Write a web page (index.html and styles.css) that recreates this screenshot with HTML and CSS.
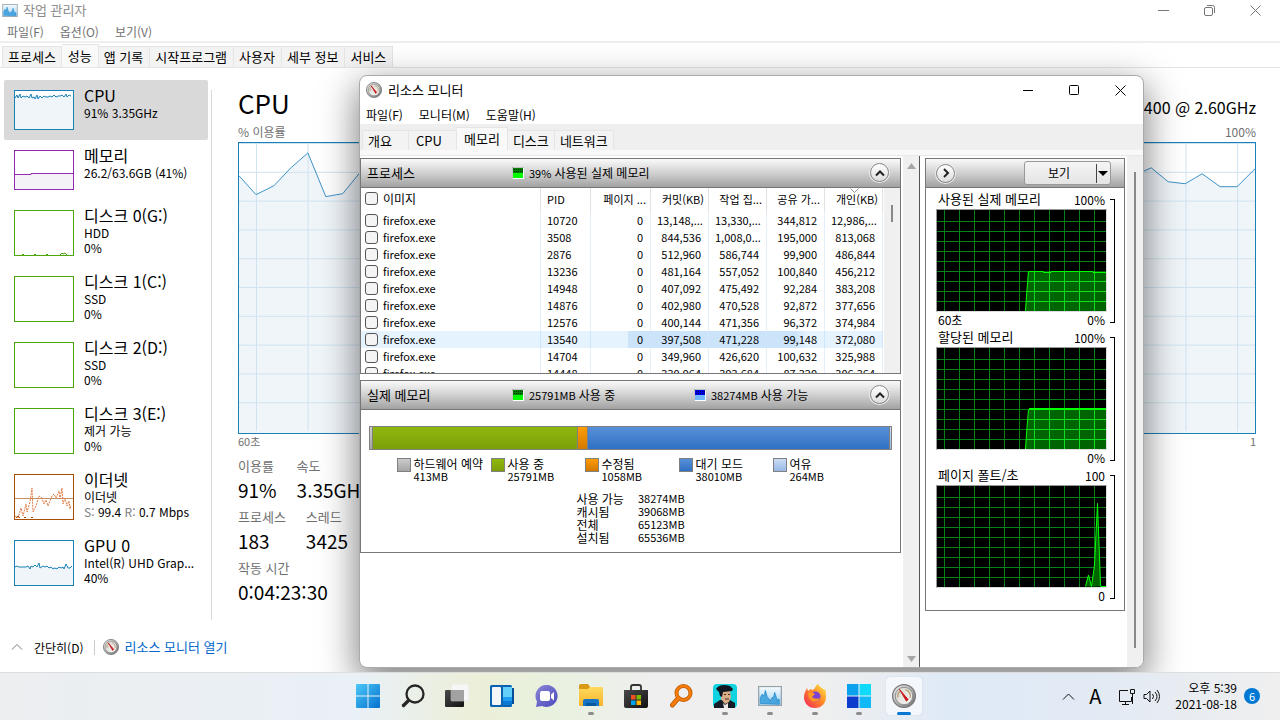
FILE: index.html
```html
<!DOCTYPE html>
<html lang="ko">
<head>
<meta charset="utf-8">
<title>작업 관리자</title>
<link rel="stylesheet" href="styles.css">
</head>
<body>
<svg class="defs" aria-hidden="true">
  <defs>
    <linearGradient id="rim" x1="0" y1="0" x2="1" y2="1"><stop offset="0" stop-color="#f4f4f4"/><stop offset="1" stop-color="#6a6a6a"/></linearGradient>
    <linearGradient id="face" x1="0" y1="0" x2="1" y2="1"><stop offset="0" stop-color="#d2d2cd"/><stop offset="1" stop-color="#fafaf7"/></linearGradient>
    <linearGradient id="win" x1="0" y1="0" x2="1" y2="1"><stop offset="0" stop-color="#4bc8f8"/><stop offset="1" stop-color="#0571cf"/></linearGradient>
    <linearGradient id="dark" x1="0" y1="0" x2="1" y2="1"><stop offset="0" stop-color="#4a4a4a"/><stop offset="1" stop-color="#111"/></linearGradient>
    <linearGradient id="chat" x1="0" y1="0" x2="1" y2="1"><stop offset="0" stop-color="#8a87d6"/><stop offset="1" stop-color="#4c48bd"/></linearGradient>
    <linearGradient id="fold" x1="0" y1="0" x2="0" y2="1"><stop offset="0" stop-color="#ffd95f"/><stop offset="1" stop-color="#f7b42a"/></linearGradient>
    <linearGradient id="fox" x1="1" y1="0" x2="0" y2="1"><stop offset="0" stop-color="#fff04a"/><stop offset=".45" stop-color="#ff8a26"/><stop offset="1" stop-color="#f0205c"/></linearGradient>
    <linearGradient id="monitor" x1="0" y1="0" x2="0" y2="1"><stop offset="0" stop-color="#f7fbfe"/><stop offset="1" stop-color="#9bd0f2"/></linearGradient>
    <pattern id="dots" width="2" height="2" patternUnits="userSpaceOnUse"><rect width="1" height="1" fill="#000" opacity=".6"/></pattern>
    <symbol id="gauge" viewBox="0 0 16 16">
      <circle cx="8" cy="8" r="7.6" fill="url(#rim)" stroke="#777" stroke-width=".8"/>
      <circle cx="8" cy="8" r="5.8" fill="url(#face)" stroke="#888" stroke-width=".6"/>
      <path d="M4 9a4.2 4.2 0 0 1 2-4.6M9 3.8a4.2 4.2 0 0 1 3 5.6" fill="none" stroke="#b9a27c" stroke-width="1"/>
      <path d="M5 3.6 10.8 10.4 9.6 11.4z" fill="#c9151b" stroke="#c9151b" stroke-width=".6"/>
    </symbol>
    <symbol id="taskmon" viewBox="0 0 26 22">
      <rect x=".7" y=".7" width="24.6" height="20.6" fill="url(#monitor)" stroke="#98a4ac" stroke-width="1.4"/>
      <path d="M2.5 19V13l2-4 2 2 1.5-6L10 12l2 2 1 3 2-4 2-1 1-5 2 6 1 4 1-3 1 1v5z" fill="#4aa7e0" stroke="#2588ca" stroke-width=".8"/>
    </symbol>
    <symbol id="grid" viewBox="0 0 171 103">
      <rect width="171" height="103" fill="#000"/>
      <path d="M8.500 1V102M23.500 1V102M38.500 1V102M53.500 1V102M68.500 1V102M83.500 1V102M98.500 1V102M113.500 1V102M128.500 1V102M143.500 1V102M158.500 1V102M1 12.500H170M1 22.500H170M1 32.500H170M1 42.500H170M1 52.500H170M1 62.500H170M1 72.500H170M1 82.500H170M1 92.500H170" stroke="#087f17" fill="none"/>
    </symbol>
    <symbol id="used" viewBox="0 0 12 12"><rect width="12" height="12" fill="#fff"/><path d="M0 12V0h12" fill="none" stroke="#888"/><rect x="1" y="1" width="10" height="5" fill="#008000"/><rect x="1" y="1" width="10" height="5" fill="url(#dots)"/><rect x="1" y="6" width="10" height="5" fill="#00fb00"/></symbol>
    <symbol id="free" viewBox="0 0 12 12"><rect width="12" height="12" fill="#fff"/><path d="M0 12V0h12" fill="none" stroke="#888"/><rect x="1" y="1" width="10" height="5" fill="#0000e8"/><rect x="1" y="1" width="10" height="5" fill="url(#dots)"/><rect x="1" y="6" width="10" height="5" fill="#74b8ff"/></symbol>
  </defs>
</svg>

<main class="desktop">
  <section class="taskmgr">
    <header class="tm-title">
      <svg class="tm-icon"><use href="#taskmon"/></svg>
      <span>작업 관리자</span>
      <div class="tm-controls">
        <button aria-label="최소화"><svg width="11" height="11"><path d="M0 5.500H11"/></svg></button>
        <button aria-label="이전 크기로"><svg width="11" height="11"><rect x=".5" y="2.500" width="8" height="8" rx="1.500"/><path d="M3 .5H8.500Q10.500 .5 10.500 2.500V8"/></svg></button>
        <button aria-label="닫기"><svg width="11" height="11"><path d="M.5 .5l10 10M10.500 .5l-10 10"/></svg></button>
      </div>
    </header>
    <nav class="menu tm-menu"><button>파일(F)</button><button>옵션(O)</button><button>보기(V)</button></nav>
    <nav class="tabs tm-tabs">
      <button>프로세스</button><button class="active">성능</button><button>앱 기록</button><button>시작프로그램</button><button>사용자</button><button>세부 정보</button><button>서비스</button>
    </nav>
    <div class="tm-body">
      <aside class="side">
        <button class="item selected"><svg class="thumb short blue" viewBox="1 1 58 38"><path class="fill" d="M1 6H59V39H1z"/><path d="M1 8l2-3 1 3 2-4 1 4 2-2 2 1 2-1 2 2 2-4 1 4 2-1 1 2 2-4 1 4 2-3 2 2 2-2 2 1 2 0 2-1 2 1 2-2 2 2 2-1 2 0 2-1 2 2 2-3 1 3 2-2 2 1"/></svg><span class="txt"><strong>CPU</strong><span>91% 3.35GHz</span></span></button>
        <button class="item"><svg class="thumb short purple" viewBox="1 1 58 38"><path class="fill" d="M1 24H17V23H59V39H1z"/><path d="M1 24.500H17V23.500H59"/></svg><span class="txt"><strong>메모리</strong><span>26.2/63.6GB (41%)</span></span></button>
        <button class="item"><svg class="thumb green" viewBox="1 1 58 44"><path d="M8 45l1-1 1 1M20 45l1-1 1 1M32 45l1-1 1 1M46 45l2-2 1 1 2-1 2 2"/></svg><span class="txt"><strong>디스크 0(G:)</strong><span>HDD</span><span>0%</span></span></button>
        <button class="item"><svg class="thumb green"></svg><span class="txt"><strong>디스크 1(C:)</strong><span>SSD</span><span>0%</span></span></button>
        <button class="item"><svg class="thumb green"></svg><span class="txt"><strong>디스크 2(D:)</strong><span>SSD</span><span>0%</span></span></button>
        <button class="item"><svg class="thumb green"></svg><span class="txt"><strong>디스크 3(E:)</strong><span>제거 가능</span><span>0%</span></span></button>
        <button class="item"><svg class="thumb brown" viewBox="1 1 58 44"><path class="level" d="M1 24.500H59"/><path class="dotted" d="M1 42l3 2 3-10 2 8 3-12 1 8 3-10 2-14 1 24 3-6 3-10 3 2 2 6 2-4 2 6 4-10 2-2 2 4 3-7 1 8 2-11 1 16 2-6 2 8 2-5 1 8 1-4"/><path d="M2 44l2-2 2 2M10 44l1-1 1 1M17 44l1-1 1 1"/></svg><span class="txt"><strong>이더넷</strong><span>이더넷</span><span><i>S:</i> 99.4 <i>R:</i> 0.7 Mbps</span></span></button>
        <button class="item"><svg class="thumb blue" viewBox="1 1 58 44"><path class="fill" d="M1 27H59V45H1z"/><path d="M1 27l2-1 2 1h7l2-1 2 3 1-3 2 1 2-2 2 2 2-4 1 5 3-2 2 1 2-1 2 2 2-1 2 2 2-1 2 1 2-2 2 1 2-1 1 2 2-5 2 4 2 0 2-2"/></svg><span class="txt"><strong>GPU 0</strong><span>Intel(R) UHD Grap...</span><span>40%</span></span></button>
      </aside>
      <section class="perf">
        <div class="perf-head"><h1>CPU</h1><span>i5-11400 @ 2.60GHz</span></div>
        <div class="caption"><span>% 이용률</span><span>100%</span></div>
        <svg class="cpu-chart" viewBox="0 0 1018 292" preserveAspectRatio="none">
          <defs><pattern id="cells" x="17" y="29" width="51.740" height="29" patternUnits="userSpaceOnUse"><path d="M.5 0V29M0 .5H52" stroke="#cfe3f0" fill="none"/></pattern></defs>
          <path fill="#f0f5fa" d="M0 33 17 52 35 43 52 25 69 10 87 54 104 51 121 30 400 40 905 29 914 25 931 39 948 41 965 31 983 44 1000 44 1018 26V292H0z"/>
          <rect width="1018" height="290" fill="url(#cells)"/>
          <path fill="none" stroke="#3b92c8" d="M0 33 17 52 35 43 52 25 69 10 87 54 104 51 121 30 400 40 905 29 914 25 931 39 948 41 965 31 983 44 1000 44 1018 26"/>
        </svg>
        <div class="caption below"><span>60초</span><span>1</span></div>
        <dl class="stats"><div><dt>이용률</dt><dd>91%</dd></div><div><dt>속도</dt><dd>3.35GHz</dd></div></dl>
        <dl class="stats"><div><dt>프로세스</dt><dd>183</dd></div><div><dt>스레드</dt><dd>3425</dd></div></dl>
        <dl class="stats"><div><dt>작동 시간</dt><dd>0:04:23:30</dd></div></dl>
      </section>
    </div>
    <footer class="tm-foot">
      <button><svg width="12" height="8"><path d="M1 6.500 6 1.500 11 6.500"/></svg>간단히(D)</button>
      <a href="#monitor-window"><svg class="g16"><use href="#gauge"/></svg>리소스 모니터 열기</a>
    </footer>
  </section>

  <section class="resmon" id="monitor-window">
    <header class="rm-title">
      <svg class="g16"><use href="#gauge"/></svg><span>리소스 모니터</span>
      <div class="rm-controls">
        <button aria-label="최소화"><svg width="11" height="11"><path d="M0 5.500H10"/></svg></button>
        <button aria-label="최대화"><svg width="11" height="11"><rect x=".5" y=".5" width="9" height="9" rx="1"/></svg></button>
        <button aria-label="닫기"><svg width="11" height="11"><path d="M.5 .5l10 10M10.500 .5l-10 10"/></svg></button>
      </div>
    </header>
    <nav class="menu rm-menu"><button>파일(F)</button><button>모니터(M)</button><button>도움말(H)</button></nav>
    <div class="rm-strip">
      <nav class="tabs rm-tabs"><button>개요</button><button>CPU</button><button class="active">메모리</button><button>디스크</button><button>네트워크</button></nav>
    </div>
    <div class="rm-body">
      <div class="left">
        <section class="panel">
          <header><h2>프로세스</h2><span class="note first"><svg><use href="#used"/></svg><span>39% <span class="ko">사용된 실제 메모리</span></span></span><button class="round" aria-label="접기"><svg width="12" height="8"><path d="M2 6.500 6 2.500 10 6.500"/></svg></button></header>
          <div class="list">
            <table>
              <colgroup><col class="c-img"><col class="c-pid"><col class="c-page"><col><col><col><col></colgroup>
              <thead><tr><th><label><input type="checkbox"><span class="ko">이미지</span></label></th><th>PID</th><th class="n">페이지 ...</th><th class="n">커밋(KB)</th><th class="n">작업 집...</th><th class="n">공유 가...</th><th class="n"><svg class="sort" width="9" height="5"><path d="M.5 .5l4 4 4-4"/></svg>개인(KB)</th></tr></thead>
              <tbody>
                <tr><td><label><input type="checkbox">firefox.exe</label></td><td>10720</td><td>0</td><td>13,148,...</td><td>13,330,...</td><td>344,812</td><td>12,986,...</td></tr>
                <tr><td><label><input type="checkbox">firefox.exe</label></td><td>3508</td><td>0</td><td>844,536</td><td>1,008,0...</td><td>195,000</td><td>813,068</td></tr>
                <tr><td><label><input type="checkbox">firefox.exe</label></td><td>2876</td><td>0</td><td>512,960</td><td>586,744</td><td>99,900</td><td>486,844</td></tr>
                <tr><td><label><input type="checkbox">firefox.exe</label></td><td>13236</td><td>0</td><td>481,164</td><td>557,052</td><td>100,840</td><td>456,212</td></tr>
                <tr><td><label><input type="checkbox">firefox.exe</label></td><td>14948</td><td>0</td><td>407,092</td><td>475,492</td><td>92,284</td><td>383,208</td></tr>
                <tr><td><label><input type="checkbox">firefox.exe</label></td><td>14876</td><td>0</td><td>402,980</td><td>470,528</td><td>92,872</td><td>377,656</td></tr>
                <tr><td><label><input type="checkbox">firefox.exe</label></td><td>12576</td><td>0</td><td>400,144</td><td>471,356</td><td>96,372</td><td>374,984</td></tr>
                <tr class="hover"><td><label><input type="checkbox">firefox.exe</label></td><td>13540</td><td>0</td><td>397,508</td><td>471,228</td><td>99,148</td><td>372,080</td></tr>
                <tr><td><label><input type="checkbox">firefox.exe</label></td><td>14704</td><td>0</td><td>349,960</td><td>426,620</td><td>100,632</td><td>325,988</td></tr>
                <tr><td><label><input type="checkbox">firefox.exe</label></td><td>14448</td><td>0</td><td>330,964</td><td>393,684</td><td>87,320</td><td>306,364</td></tr>
              </tbody>
            </table>
            <div class="list-scroll"><span></span></div>
          </div>
        </section>
        <section class="panel">
          <header><h2>실제 메모리</h2><span class="note first"><svg><use href="#used"/></svg><span>25791MB <span class="ko">사용 중</span></span></span><span class="note"><svg><use href="#free"/></svg><span>38274MB <span class="ko">사용 가능</span></span></span><button class="round" aria-label="접기"><svg width="12" height="8"><path d="M2 6.500 6 2.500 10 6.500"/></svg></button></header>
          <div class="mem">
            <div class="bar"><span class="gray"></span><span class="lime"></span><span class="amber"></span><span class="royal"></span><span class="pale"></span></div>
            <ul class="legend">
              <li><b class="gray"></b><div><div class="ko">하드웨어 예약</div>413MB</div></li>
              <li><b class="lime"></b><div><div class="ko">사용 중</div>25791MB</div></li>
              <li><b class="amber"></b><div><div class="ko">수정됨</div>1058MB</div></li>
              <li><b class="royal"></b><div><div class="ko">대기 모드</div>38010MB</div></li>
              <li><b class="pale"></b><div><div class="ko">여유</div>264MB</div></li>
            </ul>
            <dl class="totals"><dt>사용 가능</dt><dd>38274MB</dd><dt>캐시됨</dt><dd>39068MB</dd><dt>전체</dt><dd>65123MB</dd><dt>설치됨</dt><dd>65536MB</dd></dl>
          </div>
        </section>
      </div>
      <div class="left-scroll"><svg width="9" height="6"><path d="M4.500 0 9 6H0z"/></svg><svg width="9" height="6"><path d="M0 0H9L4.500 6z"/></svg></div>
      <div class="right">
        <section class="panel">
          <header><button class="round" aria-label="숨기기"><svg width="8" height="12"><path d="M2 2 6 6 2 10"/></svg></button><button class="view"><span>보기</span><svg width="15" height="19"><path class="sep" d="M1.500 0V19"/><path d="M3 7H13L8 12z"/></svg></button></header>
          <div class="graphs">
            <div class="graph">
              <div class="g-main"><div class="g-row"><span class="g-name">사용된 실제 메모리</span><span>100%</span></div>
              <svg class="plot" viewBox="1 1 169 101"><use href="#grid" width="171" height="103"/><path fill="#006400" d="M89 102 91 84 92 62H170V102z"/><path d="M98.500 62V102M113.500 62V102M128.500 62V102M143.500 62V102M158.500 62V102M92 72.500H170M91 82.500H170M90 92.500H170" stroke="#10dc20"/><path fill="none" stroke="#0f0" d="M89.500 102 91 80 92.500 62.500H107.500V63.500H115V62.500H157V63.500H170"/></svg>
              <div class="g-row"><span>60초</span><span>0%</span></div></div><i class="bracket"></i>
            </div>
            <div class="graph">
              <div class="g-main"><div class="g-row"><span class="g-name">할당된 메모리</span><span>100%</span></div>
              <svg class="plot" viewBox="1 1 169 101"><use href="#grid" width="171" height="103"/><path fill="#006400" d="M89 102 91 84 93 61H170V102z"/><path d="M98.500 62V102M113.500 62V102M128.500 62V102M143.500 62V102M158.500 62V102M92 72.500H170M91 82.500H170M90 92.500H170" stroke="#10dc20"/><path fill="none" stroke="#0f0" d="M89.500 102 91 80 92.500 63"/><path stroke="#0f0" stroke-width="2" d="M93 62H170"/></svg>
              <div class="g-row"><span></span><span>0%</span></div></div><i class="bracket"></i>
            </div>
            <div class="graph">
              <div class="g-main"><div class="g-row"><span class="g-name">페이지 폴트/초</span><span>100</span></div>
              <svg class="plot" viewBox="1 1 169 101"><use href="#grid" width="171" height="103"/><path fill="#006400" stroke="#0f0" d="M149.500 101.500 152.500 90 155.500 101.500 158.500 80 161.500 18.500 164.500 100 165 101.500H170"/></svg>
              <div class="g-row"><span></span><span>0</span></div></div><i class="bracket"></i>
            </div>
          </div>
        </section>
      </div>
      <div class="right-scroll"><span></span></div>
    </div>
  </section>
</main>

<footer class="taskbar">
  <nav class="apps">
    <button aria-label="시작"><svg viewBox="0 0 24 24"><path fill="url(#win)" d="M0 1Q0 0 1 0H11.500V11.500H0zM12.500 0H23q1 0 1 1V11.500H12.500zM0 12.500H11.500V24H1q-1 0-1-1zM12.500 12.500H24V23q0 1-1 1H12.500z"/></svg></button>
    <button aria-label="검색"><svg viewBox="0 0 24 24" fill="none" stroke="#262626" stroke-width="2.300" stroke-linecap="round"><circle cx="14" cy="10" r="8.500"/><path stroke-width="3.400" d="M7.500 16.500 2.500 21.500"/></svg></button>
    <button aria-label="작업 보기"><svg viewBox="0 0 24 24"><rect y="6" width="19" height="17" rx="1" fill="url(#dark)"/><rect x="6" width="18" height="17" rx="1" fill="#f6f6f6" stroke="#ddd" stroke-width=".5"/><path fill="#a2a2a2" d="M6 6H19V17H6z"/></svg></button>
    <button aria-label="위젯"><svg viewBox="0 0 24 24"><rect y="1" width="22" height="22" rx="1.500" fill="#0b62b0"/><path d="M20 4h4v16h-4z" fill="#064f96"/><rect x="2" y="3" width="9" height="18" rx="1" fill="#f4f5f7"/><path fill="#64cff8" d="M13 3h9v10h-9z"/><path fill="#1f9cf1" d="M13 13h9v4h-9z"/><path fill="#0b78d4" d="M13 17h9v4h-9z"/></svg></button>
    <button aria-label="채팅"><svg viewBox="0 0 24 24"><path fill="url(#chat)" d="M12 1a11 11 0 1 1-5 21L1 23l1-5.500A11 11 0 0 1 12 1z"/><rect x="5" y="7" width="10" height="10" rx="2" fill="#fff"/><path fill="#fff" d="M16 10.500 19 8v8.500l-3-2.500z"/></svg></button>
    <button aria-label="파일 탐색기" class="open"><svg viewBox="0 0 24 24"><path fill="#d99a12" d="M0 2q0-2 2-2h7l2 3v4H0z"/><path fill="url(#fold)" d="M0 5h9l2-2h12q1 0 1 1v18H1q-1 0-1-1z"/><path fill="#1674c5" d="M4 22v-5q0-2 2-2h12q2 0 2 2v5z"/><path fill="#0a579d" d="M7 19h10v3H7z"/></svg></button>
    <button aria-label="스토어"><svg viewBox="0 0 24 24"><path d="M7 7V3q0-2 2-2h6q2 0 2 2v4" fill="none" stroke="#333" stroke-width="1.800"/><path fill="url(#dark)" d="M0 6h24v16q0 2-2 2H2q-2 0-2-2z"/><path fill="#f25022" d="M7 11h4.500v4.500H7z"/><path fill="#7fba00" d="M12.500 11H17v4.500h-4.500z"/><path fill="#00a4ef" d="M7 16.500h4.500V21H7z"/><path fill="#ffb900" d="M12.500 16.500H17V21h-4.500z"/></svg></button>
    <button aria-label="찾기"><svg viewBox="0 0 24 24" fill="none" stroke="#b85800" stroke-linecap="round"><circle cx="14.500" cy="9" r="7" stroke-width="4"/><path stroke-width="5" d="M9 14.500 3.500 21"/><g stroke="#f57c0c"><circle cx="14.500" cy="9" r="7" stroke-width="2.600"/><path stroke-width="3.400" d="M9 14.500 3.500 21"/></g></svg></button>
    <button aria-label="프로필" class="open"><svg viewBox="0 0 24 24"><rect width="24" height="24" rx="4" fill="#11d3e0"/><path fill="#151c28" d="M1 24V20l6-4h10l5 3v5z"/><path fill="#d9ac88" d="M8 7h9l1 6-2 5-4 2-4-5z"/><path fill="#111722" d="M3 5q4-6 14-3l3 3-1 2-9 1-1 5-2-1-1-4z"/><path d="M11 10.500h2M15 10.500h2M12 15h4" stroke="#4a2c22"/><path fill="#e9e4de" d="m10 19 2 2 3-2v5h-4z"/></svg></button>
    <button aria-label="작업 관리자" class="open"><svg viewBox="0 0 26 22"><use href="#taskmon" width="26" height="22"/></svg></button>
    <button aria-label="Firefox" class="open"><svg viewBox="0 0 24 24"><path fill="url(#fox)" d="M12 24C5 24 1 19 1 13 1 9 3 6 4 4l1 3 3-2 1 1c3 0 3-4 6-6 1 3 5 4 6 6l1-1c1 3 1 5 1 8 0 6-4 11-11 11z"/><circle cx="12.500" cy="12.500" r="5" fill="#7b42d6"/><path fill="#ff9626" d="M5 9q4-2 7 1l-3 3q3 3 8 1-3 5-8 3-4-2-4-8z"/></svg></button>
    <button aria-label="Windows 앱" class="open"><svg viewBox="0 0 24 24"><path fill="#0aa1ee" d="M0 0h11.500v11.500H0z"/><path fill="#10dafa" d="M12.500 0H24v11.500H12.500z"/><path fill="#0d3bcb" d="M0 12.500h11.500V24H0z"/><path fill="#12b9f7" d="M12.500 12.500H24V24H12.500z"/></svg></button>
    <button aria-label="리소스 모니터" class="open current"><svg viewBox="0 0 16 16"><use href="#gauge" width="16" height="16"/></svg></button>
  </nav>
  <div class="tray">
    <button aria-label="숨겨진 아이콘 표시"><svg width="13" height="9"><path d="M1 7.500 6.500 2 12 7.500"/></svg></button>
    <span class="ime">A</span>
    <svg width="18" height="17"><path d="M10 2.500H1.500V13.500H13.500V9M7.500 13.500v3M4 16.500h7"/><path d="M12.500 1.500h4v4h-4zM14.500 5.500V16"/></svg>
    <svg width="17" height="15"><path d="M1 5.500h2.500L7 2v11L3.500 9.500H1zM9.500 5q2 2.500 0 5M12 3q4 4.500 0 9M14 1q5 6.500 0 13"/></svg>
    <time datetime="2021-08-18T17:39">오후 5:39<br>2021-08-18</time>
    <span class="badge">6</span>
  </div>
</footer>
</body>
</html>
```
FILE: styles.css
```css
* { box-sizing: border-box; }
body {
  margin: 0; height: 100vh; display: flex; flex-direction: column; overflow: hidden;
  font: 12px/16px "Noto Sans CJK KR", sans-serif; color: #000; background: #fff;
}
button { font: inherit; color: inherit; background: none; border: 0; padding: 0; margin: 0; white-space: nowrap; }
h1, h2, dl, dd, dt, ul { margin: 0; padding: 0; font-weight: 400; }
.defs { position: absolute; width: 0; height: 0; }
.g16 { width: 16px; height: 16px; flex: none; }
.ko { font-size: 12px; }
.desktop { position: relative; flex: 1; min-height: 0; overflow: hidden; }

/* Task manager */
.taskmgr { height: 100%; display: flex; flex-direction: column; }
.tm-title { display: flex; align-items: center; height: 22px; padding: 0 2px 2px; gap: 5px; font-size: 13px; color: #8c8c8c; }
.tm-icon { width: 16px; height: 13px; }
.tm-controls { margin-left: auto; display: flex; }
.tm-controls button { width: 46px; display: grid; place-items: center; }
.tm-controls svg { fill: none; stroke: #777; }
.menu { display: flex; gap: 16px; padding-left: 7px; height: 20px; }
.tm-menu { height: 21px; border-bottom: 2px solid #efefef; color: #707070; }
.tabs { display: flex; align-items: flex-end; }
.tabs button { height: 21px; padding: 0 5px; border: 1px solid #e5e5e5; border-left-width: 0; border-bottom: 0; background: #f3f3f3; font-size: 13px; line-height: 18px; }
.tabs button:first-child { border-left-width: 1px; }
.tabs .active { height: 23px; background: #f9f9f9; }
.tm-tabs { height: 25px; padding-left: 2px; border-bottom: 1px solid #e5e5e5; }
.tm-tabs button:nth-child(n+3) { padding-right: 6px; }
.tm-tabs .active { padding: 0 6px; }
.tm-body { flex: 1; min-height: 0; display: flex; padding: 12px 24px 0 4px; }
.side { width: 204px; flex: none; }
.item { display: flex; width: 100%; gap: 10px; height: 66px; padding: 5px 0 0 10px; text-align: left; align-items: flex-start; }
.item:nth-child(-n+2) { height: 60px; }
.selected { background: #d9d9d9; border-radius: 2px; }
.thumb { width: 60px; height: 46px; margin-top: 5px; flex: none; border: 1px solid; background: #fff; fill: none; stroke: currentColor; }
.short { height: 40px; }
.thumb .fill { stroke: none; fill: #f0f5fa; }
.blue { color: #1a80b8; }
.purple { color: #9528b4; }
.purple .fill { fill: #f4f2f6; }
.green { color: #4da60c; }
.brown { color: #a74f01; }
.thumb .dotted { stroke: #e07840; stroke-dasharray: 2 1; }
.thumb .level { stroke: #c49068; }
.txt { display: flex; flex-direction: column; line-height: 15px; }
.txt strong { font-weight: 400; font-size: 16px; line-height: 20px; }
.txt i { font-style: normal; color: #808080; }
.perf { flex: 1; min-width: 0; margin: 10px 0 4px 3px; padding-left: 26px; border-left: 1px solid #d9d9d9; }
.perf-head { display: flex; justify-content: space-between; align-items: flex-end; height: 34px; margin-top: -4px; padding-bottom: 1px; font-size: 16px; line-height: 24px; }
.perf-head h1 { font-size: 26px; line-height: 32px; }
.caption { display: flex; justify-content: space-between; height: 22px; line-height: 23px; color: #707070; }
.cpu-chart { display: block; width: 100%; height: 292px; border: 1px solid #1a80b8; }
.caption.below { height: 23px; line-height: 15px; font-size: 11px; }
.stats { display: flex; gap: 20px; height: 51px; font-size: 13px; color: #707070; }
.stats dd { font-size: 19px; line-height: 28px; color: #000; margin-top: 1px; }
.stats dt { line-height: 18px; }
.tm-foot { height: 48px; display: flex; align-items: center; padding: 0 0 2px 11px; font-size: 13px; }
.tm-foot button { display: flex; gap: 11px; align-items: center; padding-right: 10px; border-right: 1px solid #ccc; line-height: 15px; font-size: 12px; }
.tm-foot button svg { fill: none; stroke: #777; }
.tm-foot a { display: flex; gap: 6px; margin-left: 8px; color: #0066cc; text-decoration: none; }

/* Resource monitor */
.resmon {
  position: absolute; left: 359px; top: 75px; width: 785px; height: 593px; overflow: hidden;
  display: flex; flex-direction: column; background: #fff; border: 1px solid #aaa; border-radius: 8px;
  box-shadow: 0 12px 36px 2px rgba(0,0,0,.5);
}
.rm-title { display: flex; align-items: center; gap: 6px; height: 28px; padding-left: 6px; font-size: 13px; flex: none; }
.rm-controls { margin-left: auto; display: flex; }
.rm-controls button { width: 46px; display: grid; place-items: center; }
.rm-controls svg { fill: none; stroke: #000; }
.rm-menu { padding-left: 6px; flex: none; line-height: 22px; font-size: 12px; }
.rm-strip { background: #efefef; flex: none; padding-top: 2px; border-bottom: 1px solid #e8e8e8; }
.rm-tabs { height: 29px; padding: 0 1px 0 2px; border-bottom: 5px solid #f9f9f9; }
.rm-tabs button { min-width: 47px; height: 20px; padding: 0 5px; text-align: left; }
.rm-tabs button:nth-child(2) { padding-left: 7px; min-width: 48px; }
.rm-tabs .active { height: 23px; padding: 0 7px; }
.rm-body { flex: 1; min-height: 0; display: flex; }
.left { flex: 1; min-width: 0; display: flex; flex-direction: column; gap: 6px; padding: 2px 2px 0 0; }
.panel { border: 1px solid #777; background: #fff; }
.panel header { display: flex; align-items: center; height: 29px; padding: 0 11px 1px 6px; background: linear-gradient(#fafafa, #d0d0d0 50%, #a2a2a2); border-bottom: 1px solid #777; font-size: 11px; }
.panel h2 { font-size: 13px; width: 145px; line-height: 18px; flex: none; }
.note { display: flex; align-items: center; gap: 5px; white-space: nowrap; }
.note svg { width: 12px; height: 12px; flex: none; }
.first { width: 182px; }
.round { margin-left: auto; width: 19px; height: 19px; flex: none; border-radius: 50%; border: 1px solid #888; background: linear-gradient(#fff, #ddd); box-shadow: 0 0 0 1px #eee; display: grid; place-items: center; }
.round svg { fill: none; stroke: #222; stroke-width: 2; }
.list { height: 185px; overflow: hidden; display: flex; font-size: 11px; }
.list table { flex: none; width: 522px; table-layout: fixed; border-collapse: separate; border-spacing: 0; align-self: flex-start; }
.c-img { width: 180px; }
.c-pid { width: 50px; }
.c-page { width: 60px; }
.list th { position: relative; height: 24px; padding: 0 5px 3px 6px; font-weight: 400; text-align: left; border-right: 1px solid #e2e2e2; white-space: nowrap; }
.list th.n { text-align: right; padding: 0 4px 3px 0; }
.sort { position: absolute; left: 25px; top: 0; fill: none; stroke: #999; }
.list td { height: 17px; line-height: 17px; padding: 0 7px 0 6px; border-right: 1px solid #e3effa; text-align: right; white-space: nowrap; }
.list td:first-child, .list td:nth-child(2) { text-align: left; }
.list td:first-child, .list th:first-child { padding-left: 4px; }
.list label { display: flex; align-items: center; gap: 5px; }
.list input { appearance: none; width: 13px; height: 13px; margin: 0; border: 1px solid #555; border-radius: 3px; background: #f4f4f4; flex: none; }
.hover td { background: #e5f3ff; border-color: #cfe6fa; }
.hover td:nth-child(3) { background: linear-gradient(90deg, #e5f3ff 62%, #cce4f9 62%); }
.hover td:nth-child(4), .hover td:nth-child(5) { background: #cce4f9; }
.hover td:nth-child(6) { background: linear-gradient(90deg, #cce4f9 50%, #e5f3ff 70%); }
.list-scroll { flex: 1; margin-left: 1px; background: #f0f0f0; padding: 17px 0 0 7px; }
.list-scroll span { display: block; width: 2px; height: 17px; background: #888; }
.mem { padding: 16px 8px 0; height: 142px; font-size: 11px; line-height: 13px; }
.bar { display: flex; height: 24px; border: 1px solid #808080; }
.bar span + span { border-left: 1px solid #808080; }
.bar .gray, .bar .pale { width: 2px; }
.bar .lime { flex: 25791; }
.bar .amber { flex: 1058; }
.bar .royal { flex: 38010; }
.gray { background: linear-gradient(#ccc, #a5a5a5); }
.lime { background: linear-gradient(#8fb80e, #7c9f0a); }
.amber { background: linear-gradient(#ff9c05, #d27a00); }
.royal { background: linear-gradient(#5890d8, #3071c4); }
.pale { background: linear-gradient(#c9dcf5, #97b8e6); }
.legend { list-style: none; display: grid; grid-template-columns: repeat(5, 94px); justify-content: center; padding: 7px 0 0 2px; }
.legend li { display: flex; gap: 3px; white-space: nowrap; }
.legend b { width: 14px; height: 14px; margin-top: 1px; border: 1px solid #808080; flex: none; }
.totals { display: grid; grid-template-columns: auto auto; justify-content: center; column-gap: 14px; margin-top: 9px; }
.totals dt { font-size: 12px; }
.left-scroll { width: 17px; flex: none; background: #f0f0f0; border-right: 1px solid #555; display: flex; flex-direction: column; justify-content: space-between; align-items: center; padding: 7px 0 5px; fill: #a6a6a6; }
.right { width: 207px; flex: none; padding: 2px 2px 0 5px; }
.right header { padding: 0 13px 0 10px; }
.right .round { margin: 0; }
.view { margin-left: auto; width: 87px; height: 24px; border: 1px solid #999; border-radius: 3px; background: linear-gradient(#f5f5f5, #e4e4e4); display: flex; align-items: center; justify-content: space-between; font-size: 12px; }
.view span { flex: 1; padding-right: 2px; text-align: center; }
.sep { stroke: #444; }
.graphs { padding: 4px 9px 4px 10px; }
.graph { display: flex; gap: 3px; height: 138px; }
.g-main { width: 171px; }
.g-row { display: flex; justify-content: space-between; height: 17px; padding: 0 2px; line-height: 15px; font-size: 12px; }
.g-name { font-size: 13px; line-height: 14px; }
.plot { display: block; width: 171px; height: 103px; border: 1px solid; border-color: #999 #ddd #ddd #999; }
.bracket { width: 6px; height: 124px; margin-top: 7px; border: 1px solid #000; border-left: 0; }
.right-scroll { width: 16px; flex: none; background: #f0f0f0; padding: 16px 0 19px 7px; display: flex; }
.right-scroll span { width: 2px; background: #888; }

/* Taskbar */
.taskbar { height: 48px; flex: none; display: grid; grid-template-columns: 1fr 580px 1fr; padding: 0 8px 1px 0; background: linear-gradient(90deg, #eceef0 0, #e9f0f6 28%, #ecefd9 37%, #e8f1de 43%, #efefef 51%, #efefef 64%, #dfeaf7 74%, #e2eaf4 86%, #efefef); border-top: 1px solid #ddd; }
.apps { grid-column: 2; display: flex; justify-content: space-between; align-items: center; }
.apps button { position: relative; width: 44px; height: 38px; display: grid; place-items: center; }
.apps svg { width: 24px; height: 24px; }
.apps .current { width: 36px; margin: 0 4px; background: #f4f7fc; border-radius: 4px; box-shadow: 0 0 1px #bbb; }
.open::after { content: ""; position: absolute; left: 19px; bottom: 0; width: 6px; height: 3px; border-radius: 2px; background: #8c8c8c; }
.current::after { left: 11px; width: 14px; background: #0878d4; }
.tray { grid-column: 3; display: flex; align-items: center; justify-content: flex-end; gap: 7px; padding-right: 12px; }
.tray svg { fill: none; stroke: #111; }
.tray button { margin-right: 7px; }
.ime { font-size: 20px; line-height: 24px; margin-right: 10px; }
.tray time { text-align: right; margin-left: 8px; white-space: nowrap; }
.badge { width: 16px; height: 16px; border-radius: 50%; background: #0078d4; color: #fff; text-align: center; font-size: 11px; line-height: 16px; }
```
